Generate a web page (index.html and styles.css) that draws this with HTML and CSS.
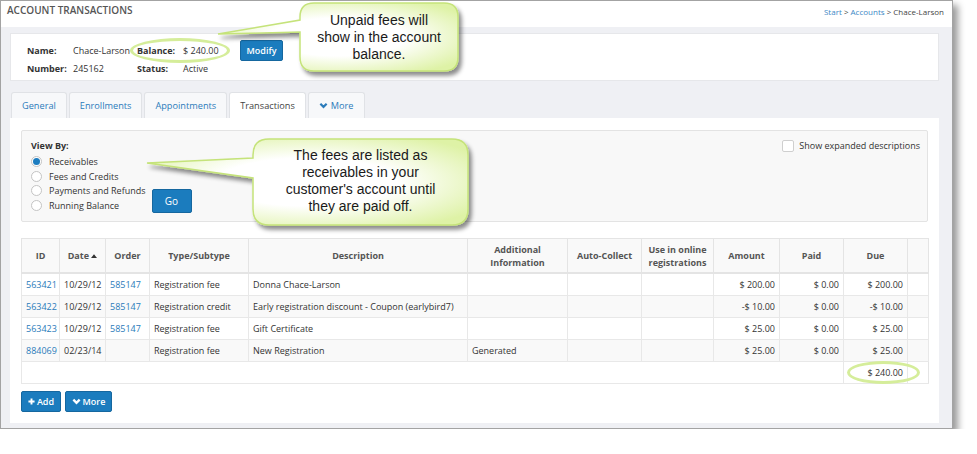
FILE: index.html
```html
<!DOCTYPE html>
<html lang="en">
  <head>
    <meta charset="UTF-8" />
    <meta name="viewport" content="width=device-width, initial-scale=1.0" />
    <title>Account Transactions</title>
    <link rel="stylesheet" href="styles.css">
  </head>
  <body>
    <div class="window">
      <div class="topbar">
        <h1>Account Transactions</h1>
        <div class="crumbs"><a href="#">Start</a> &gt; <a href="#">Accounts</a> &gt; Chace-Larson</div>
      </div>

      <div class="main">
        <div class="account-card">
          <span class="lbl">Name:</span>
          <span>Chace-Larson</span>
          <span class="lbl">Balance:</span>
          <span>$ 240.00</span>
          <button class="btn btn-modify">Modify</button>
          <span class="lbl">Number:</span>
          <span>245162</span>
          <span class="lbl">Status:</span>
          <span>Active</span>
        </div>

        <ul class="tabs">
          <li><a href="#">General</a></li>
          <li><a href="#">Enrollments</a></li>
          <li><a href="#">Appointments</a></li>
          <li class="active"><a href="#">Transactions</a></li>
          <li>
            <a href="#">
              <svg class="chev" viewBox="0 0 10 7"><polyline points="1.5,1.5 5,5 8.5,1.5" /></svg>More
            </a>
          </li>
        </ul>

        <div class="panel">
          <div class="filter">
            <div class="view-by">
              <div class="filter-title">View By:</div>
              <div class="filter-row">
                <div class="radios">
                  <label class="radio checked"><span class="dot"></span>Receivables</label>
                  <label class="radio"><span class="dot"></span>Fees and Credits</label>
                  <label class="radio"><span class="dot"></span>Payments and Refunds</label>
                  <label class="radio"><span class="dot"></span>Running Balance</label>
                </div>
                <button class="btn btn-go">Go</button>
              </div>
            </div>
            <label class="check"><span class="box"></span>Show expanded descriptions</label>
          </div>

          <table class="tx">
            <colgroup>
              <col style="width: 38px" />
              <col style="width: 46px" />
              <col style="width: 44px" />
              <col style="width: 99px" />
              <col style="width: 219px" />
              <col style="width: 100px" />
              <col style="width: 74px" />
              <col style="width: 72px" />
              <col style="width: 66px" />
              <col style="width: 64px" />
              <col style="width: 64px" />
              <col style="width: 21px" />
            </colgroup>
            <thead>
              <tr>
                <th>ID</th>
                <th>Date <svg class="sort" viewBox="0 0 8 5"><polygon points="0,5 4,0 8,5" /></svg></th>
                <th>Order</th>
                <th>Type/Subtype</th>
                <th>Description</th>
                <th>Additional Information</th>
                <th>Auto-Collect</th>
                <th>Use in online registrations</th>
                <th>Amount</th>
                <th>Paid</th>
                <th>Due</th>
                <th></th>
              </tr>
            </thead>
            <tbody>
              <tr>
                <td><a href="#">563421</a></td>
                <td>10/29/12</td>
                <td><a href="#">585147</a></td>
                <td>Registration fee</td>
                <td>Donna Chace-Larson</td>
                <td></td>
                <td></td>
                <td></td>
                <td class="num">$ 200.00</td>
                <td class="num">$ 0.00</td>
                <td class="num">$ 200.00</td>
                <td></td>
              </tr>
              <tr>
                <td><a href="#">563422</a></td>
                <td>10/29/12</td>
                <td><a href="#">585147</a></td>
                <td>Registration credit</td>
                <td>Early registration discount - Coupon (earlybird7)</td>
                <td></td>
                <td></td>
                <td></td>
                <td class="num">-$ 10.00</td>
                <td class="num">$ 0.00</td>
                <td class="num">-$ 10.00</td>
                <td></td>
              </tr>
              <tr>
                <td><a href="#">563423</a></td>
                <td>10/29/12</td>
                <td><a href="#">585147</a></td>
                <td>Registration fee</td>
                <td>Gift Certificate</td>
                <td></td>
                <td></td>
                <td></td>
                <td class="num">$ 25.00</td>
                <td class="num">$ 0.00</td>
                <td class="num">$ 25.00</td>
                <td></td>
              </tr>
              <tr>
                <td><a href="#">884069</a></td>
                <td>02/23/14</td>
                <td></td>
                <td>Registration fee</td>
                <td>New Registration</td>
                <td>Generated</td>
                <td></td>
                <td></td>
                <td class="num">$ 25.00</td>
                <td class="num">$ 0.00</td>
                <td class="num">$ 25.00</td>
                <td></td>
              </tr>
              <tr class="total">
                <td colspan="10"></td>
                <td class="num">$ 240.00</td>
                <td class="last"></td>
              </tr>
            </tbody>
          </table>

          <div class="actions">
            <button class="btn btn-sm">
              <svg class="plus" viewBox="0 0 8 8"><path d="M4 0.5V7.5M0.5 4H7.5" /></svg>Add
            </button>
            <button class="btn btn-sm">
              <svg class="chev" viewBox="0 0 10 7"><polyline points="1.5,1.5 5,5 8.5,1.5" /></svg>More
            </button>
          </div>
        </div>
      </div>
    </div>

    <!-- annotations -->
    <div class="ring ring-balance"></div>
    <div class="ring ring-total"></div>

    <div class="callout callout-balance">
      <svg width="265" height="85">
        <defs>
          <radialGradient id="g1" cx="50%" cy="50%" r="62%">
            <stop offset="0.45" stop-color="#ffffff" />
            <stop offset="1" stop-color="#def2a6" />
          </radialGradient>
          <filter id="sh1" x="-10%" y="-20%" width="130%" height="150%">
            <feDropShadow dx="3" dy="4" stdDeviation="2.2" flood-color="#000" flood-opacity="0.45" />
          </filter>
        </defs>
        <path d="M106,3 H236 Q250,3 250,17 V57 Q250,71 236,71 H106 Q92,71 92,57 V32 L10,34 L92,20 V17 Q92,3 106,3 Z"
          fill="url(#g1)" stroke="#c5e37a" stroke-width="1.5" filter="url(#sh1)" />
      </svg>
      <div class="callout-text">Unpaid fees will<br />show in the account<br />balance.</div>
    </div>

    <div class="callout callout-fees">
      <svg width="345" height="108">
        <defs>
          <radialGradient id="g2" cx="50%" cy="50%" r="62%">
            <stop offset="0.45" stop-color="#ffffff" />
            <stop offset="1" stop-color="#def2a6" />
          </radialGradient>
          <filter id="sh2" x="-10%" y="-20%" width="130%" height="150%">
            <feDropShadow dx="3" dy="4" stdDeviation="2.2" flood-color="#000" flood-opacity="0.45" />
          </filter>
        </defs>
        <path d="M129,11 H312 Q328,11 328,27 V81 Q328,97 312,97 H129 Q113,97 113,81 V50 L7,35 L113,30 V27 Q113,11 129,11 Z"
          fill="url(#g2)" stroke="#c5e37a" stroke-width="1.5" filter="url(#sh2)" />
      </svg>
      <div class="callout-text">The fees are listed as<br />receivables in your<br />customer's account until<br />they are paid off.</div>
    </div>
  </body>
</html>
```

FILE: styles.css
```css
body {
  margin: 0;
  background: #fff;
  font-family: "Open Sans", "Liberation Sans", sans-serif;
  font-size: 9px;
  color: #333;
}

a {
  color: #2b7bba;
  text-decoration: none;
}

.window {
  box-sizing: border-box;
  width: 953px;
  height: 429px;
  border: 1px solid #a3a3a3;
  background: #eff0f4;
  box-shadow: 5px 5px 7px rgba(0, 0, 0, 0.4);
}

.topbar {
  box-sizing: border-box;
  height: 26px;
  background: #fff;
  display: flex;
  justify-content: space-between;
  align-items: flex-start;
  padding: 2px 8px 0 6px;
}

.topbar h1 {
  margin: 0;
  font-size: 10px;
  font-weight: 600;
  line-height: 15px;
  text-transform: uppercase;
  color: #555;
}

.crumbs {
  font-size: 8px;
  line-height: 15px;
  padding-top: 1px;
  color: #444;
}

.crumbs a {
  color: #3d88c6;
}

.main {
  padding: 6px 13px 0 9px;
}

.account-card {
  background: #fff;
  border: 1px solid #e6e7ea;
  height: 48px;
  box-sizing: border-box;
  padding: 6px 0 0 16px;
  display: grid;
  grid-template-columns: 46px 64px 46px 57px auto;
  grid-template-rows: 21px 14px;
  align-items: center;
}

.lbl {
  font-weight: 700;
}

.btn {
  font-family: "Open Sans", "Liberation Sans", sans-serif;
  background: #1b7cbe;
  border: 1px solid #15679f;
  border-radius: 2px;
  color: #fff;
  cursor: pointer;
  padding: 0;
}

.btn-modify {
  width: 43px;
  height: 21px;
  font-size: 9px;
  font-weight: 600;
}

.tabs {
  list-style: none;
  margin: 11px 0 0 1px;
  padding: 0;
  display: flex;
  gap: 2px;
}

.tabs li {
  background: #f7f8fa;
  border: 1px solid #e0e2e6;
  border-bottom: none;
  border-radius: 3px 3px 0 0;
}

.tabs li a {
  display: flex;
  align-items: center;
  height: 25px;
  padding: 0 10px;
  font-size: 9.2px;
  color: #2b7bba;
}

.tabs li.active {
  background: #fff;
}

.tabs li.active a {
  color: #444;
}

.chev {
  width: 9px;
  height: 7px;
  margin-right: 3px;
  fill: none;
  stroke: currentColor;
  stroke-width: 2.4;
  flex-shrink: 0;
}

.panel {
  background: #fff;
  padding: 12px 11px 11px 11px;
}

.filter {
  height: 92px;
  box-sizing: border-box;
  background: #f8f8f8;
  border: 1px solid #e3e3e3;
  border-radius: 2px;
  padding: 8px 7px 0 9px;
  display: flex;
  justify-content: space-between;
  align-items: flex-start;
}

.filter-title {
  font-weight: 700;
  line-height: 14px;
}

.filter-row {
  display: flex;
  align-items: flex-end;
  gap: 6px;
}

.radios {
  display: flex;
  flex-direction: column;
  margin-top: 1px;
}

.radio {
  display: flex;
  align-items: center;
  height: 14.7px;
}

.radio .dot {
  width: 11px;
  height: 11px;
  box-sizing: border-box;
  border: 1px solid #c4c4c4;
  border-radius: 50%;
  background: #fff;
  margin-right: 7px;
  display: flex;
  align-items: center;
  justify-content: center;
}

.radio.checked .dot::after {
  content: "";
  width: 7px;
  height: 7px;
  border-radius: 50%;
  background: #1d7dc0;
}

.btn-go {
  width: 40px;
  height: 24px;
  font-size: 10px;
}

.check {
  display: flex;
  align-items: center;
}

.check .box {
  width: 12px;
  height: 12px;
  box-sizing: border-box;
  border: 1px solid #cfcfcf;
  border-radius: 2px;
  background: #fff;
  margin-right: 5px;
}

.tx {
  margin-top: 16px;
  width: 907px;
  table-layout: fixed;
  border-collapse: collapse;
  border: 1px solid #e4e4e4;
}

.tx th {
  height: 33px;
  background: #f9f9f9;
  color: #555;
  font-weight: 700;
  line-height: 13px;
  padding: 0 4px;
  text-align: center;
  border: 1px solid #e4e4e4;
  border-bottom-width: 2px;
}

.tx td {
  height: 21px;
  padding: 0 4px;
  border: 1px solid #e8e8e8;
  white-space: nowrap;
  overflow: hidden;
}

.tx tbody tr:nth-child(even) td {
  background: #f9f9f9;
}

.tx td.num {
  text-align: right;
}

.tx tr.total td {
  border-right: none;
}

.tx tr.total td.num {
  border-left: 1px solid #e8e8e8;
}

.sort {
  width: 6px;
  height: 4px;
  fill: #333;
  vertical-align: 1px;
}

.actions {
  margin-top: 7px;
  display: flex;
  gap: 4px;
}

.btn-sm {
  height: 21px;
  padding: 0 7px;
  font-size: 9px;
  font-weight: 600;
  display: flex;
  align-items: center;
  justify-content: center;
}

.btn-sm:first-child {
  width: 40px;
}

.btn-sm:last-child {
  width: 47px;
}

.btn-sm .chev {
  width: 9px;
  height: 7px;
  margin-right: 2px;
  stroke-width: 2.6;
}

.plus {
  width: 7px;
  height: 7px;
  margin-right: 2px;
  stroke: #fff;
  stroke-width: 2.2;
  flex-shrink: 0;
}

.ring {
  position: absolute;
  box-sizing: border-box;
  border: 3px solid #d5ed9a;
  border-radius: 50%;
}

.ring-balance {
  left: 130px;
  top: 38px;
  width: 100px;
  height: 25px;
}

.ring-total {
  left: 847px;
  top: 361px;
  width: 73px;
  height: 23px;
}

.callout {
  position: absolute;
}

.callout svg {
  display: block;
}

.callout-text {
  position: absolute;
  font-family: "Liberation Sans", Arial, sans-serif;
  font-size: 14px;
  line-height: 17px;
  color: #1a1a1a;
  text-align: center;
}

.callout-balance {
  left: 208px;
  top: 0;
}

.callout-balance .callout-text {
  left: 92px;
  top: 12px;
  width: 158px;
}

.callout-fees {
  left: 140px;
  top: 128px;
}

.callout-fees .callout-text {
  left: 113px;
  top: 19px;
  width: 215px;
}
```
